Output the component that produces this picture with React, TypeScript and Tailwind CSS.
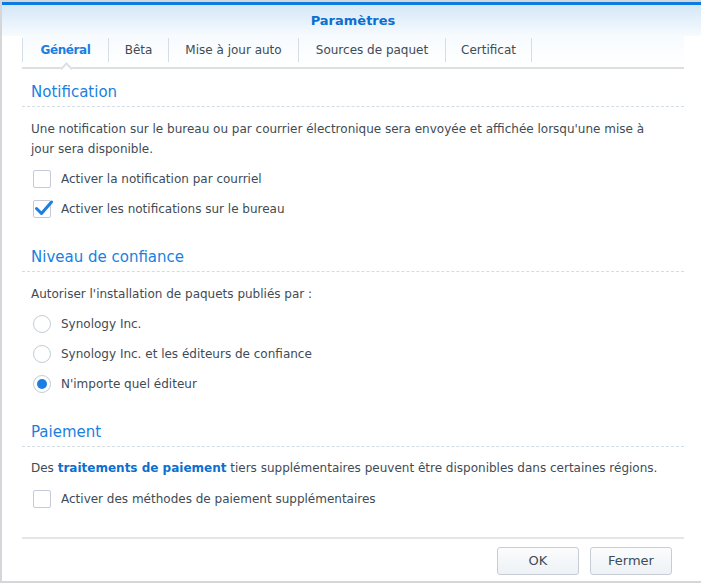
import React from "react";

const font = { fontFamily: '"DejaVu Sans", Verdana, sans-serif' };

function Checkbox({ checked }: { checked?: boolean }) {
  return (
    <div className="relative w-[18px] h-[18px] rounded-[2px] border border-[#c3ccd6] bg-white shrink-0">
      {checked && (
        <svg className="absolute left-[0px] top-[-3px]" width="20" height="20" viewBox="0 0 20 20">
          <path d="M2.5 10.5 L7.5 15.5 L17.5 4" fill="none" stroke="#1a7fe0" strokeWidth="3" strokeLinecap="round" strokeLinejoin="round" />
        </svg>
      )}
    </div>
  );
}

function Radio({ checked }: { checked?: boolean }) {
  return (
    <div className="w-[18px] h-[18px] rounded-full border border-[#c3ccd6] bg-white shrink-0 flex items-center justify-center">
      {checked && <div className="w-[10px] h-[10px] rounded-full bg-[#1a7fe0]" />}
    </div>
  );
}

function Row({ children, label }: { children: React.ReactNode; label: string }) {
  return (
    <div className="h-[30px] flex items-center pl-[11px] gap-[10px]">
      {children}
      <span>{label}</span>
    </div>
  );
}

function Heading({ text, first }: { text: string; first?: boolean }) {
  return (
    <div
      className={`${first ? "pt-[13px]" : "pt-[23px]"} pb-[4px] pl-[9px] leading-[20px] text-[15px] text-[#1a7fdf] border-b border-dashed border-[#d3dde6]`}
    >
      {text}
    </div>
  );
}

const tabs: { t: string; w: string }[] = [
  { t: "Général", w: "w-[85px]" },
  { t: "Bêta", w: "w-[59px]" },
  { t: "Mise à jour auto", w: "w-[129px]" },
  { t: "Sources de paquet", w: "w-[146px]" },
  { t: "Certificat", w: "w-[85px]" },
];

export default function App() {
  return (
    <div className="w-[701px] h-[583px] bg-[#d4d6d9] overflow-hidden" style={font}>
      <div className="ml-[2px] mt-[2px] w-[700px] h-[579px] bg-white border-t-[3px] border-[#0a7be0] flex flex-col text-[12px] text-[#414b55]">
        {/* header */}
        <div className="h-[31px] shrink-0 bg-gradient-to-b from-[#d5e7f8] to-[#f7fbfe] flex items-center justify-center">
          <span className="text-[13px] font-bold text-[#0b6fd0] ml-[2px]">Paramètres</span>
        </div>
        <div className="flex-1 flex flex-col pl-[20px] pr-[18px]">
          {/* tabs */}
          <div className="relative h-[33px] flex items-center pb-[4px] border-b-2 border-[#dcdfe2] bg-gradient-to-b from-[#f7fbfe] to-white">
            <div className="h-[24px] w-px bg-[#d5dde5]" />
            {tabs.map((tab, i) => (
              <React.Fragment key={tab.t}>
                <div
                  className={`${tab.w} text-center whitespace-nowrap ${
                    i === 0 ? "font-bold text-[#1a7fdf] tracking-[-0.4px]" : "text-[#414b55]"
                  }`}
                >
                  {tab.t}
                </div>
                <div className="h-[24px] w-px bg-[#d5dde5]" />
              </React.Fragment>
            ))}
            <div className="absolute left-[40px] bottom-[-6px] w-[9px] h-[9px] rotate-45 bg-white border-l-2 border-t-2 border-[#dcdfe2]" />
          </div>

          <Heading text="Notification" first />
          <div className="pl-[9px] mt-[12px] leading-[20px]">
            Une notification sur le bureau ou par courrier électronique sera envoyée et affichée lorsqu'une mise à
            <br />
            jour sera disponible.
          </div>
          <div className="mt-[5px]">
            <Row label="Activer la notification par courriel">
              <Checkbox />
            </Row>
            <Row label="Activer les notifications sur le bureau">
              <Checkbox checked />
            </Row>
          </div>

          <Heading text="Niveau de confiance" />
          <div className="pl-[9px] mt-[12px] leading-[20px]">Autoriser l'installation de paquets publiés par :</div>
          <div className="mt-[5px]">
            <Row label="Synology Inc.">
              <Radio />
            </Row>
            <Row label="Synology Inc. et les éditeurs de confiance">
              <Radio />
            </Row>
            <Row label="N'importe quel éditeur">
              <Radio checked />
            </Row>
          </div>

          <Heading text="Paiement" />
          <div className="pl-[9px] mt-[11px] leading-[20px]">
            Des <span className="font-bold text-[#0b6fd0]">traitements de paiement</span> tiers supplémentaires peuvent être disponibles dans certaines régions.
          </div>
          <div className="mt-[6px]">
            <Row label="Activer des méthodes de paiement supplémentaires">
              <Checkbox />
            </Row>
          </div>

          <div className="flex-1" />
          {/* footer */}
          <div className="border-t-2 border-[#e3e5e7] h-[44px] flex items-start justify-end gap-[11px] pr-[12px] pt-[8px]">
            <button className="w-[82px] h-[28px] rounded-[3px] border border-[#c6cdd5] bg-gradient-to-b from-[#fbfcfd] to-[#eef2f5] text-[13px] text-[#414b55]">
              OK
            </button>
            <button className="w-[82px] h-[28px] rounded-[3px] border border-[#c6cdd5] bg-gradient-to-b from-[#fbfcfd] to-[#eef2f5] text-[13px] text-[#414b55]">
              Fermer
            </button>
          </div>
        </div>
      </div>
    </div>
  );
}
